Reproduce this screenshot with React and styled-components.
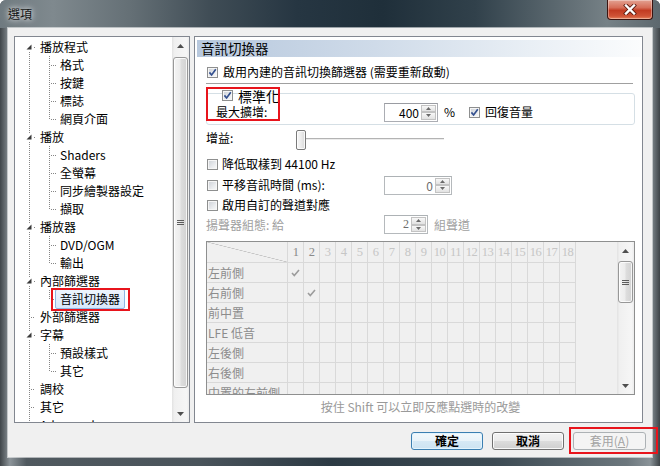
import React from 'react';
import styled, { createGlobalStyle, css } from 'styled-components';

const FONT = `"Noto Sans CJK TC", "Noto Sans", sans-serif`;

const GlobalStyle = createGlobalStyle`
  html, body { margin: 0; padding: 0; background: #ffffff; }
  body { font-family: ${FONT}; font-size: 12px; }
  *, *::before, *::after { box-sizing: border-box; }
`;

const Window = styled.div`
  position: relative;
  width: 660px;
  height: 466px;
  display: flex;
  flex-direction: column;
  border-radius: 6px 6px 0 0;
  overflow: hidden;
  font-family: ${FONT};
  background: linear-gradient(90deg, #3f4549 0%, #8c9499 1.5%, #50595f 4%, #4a545b 30%, #2c3a44 50%, #3c4a53 75%, #6c777d 95%, #8a9398 98.5%, #3d4347 100%);
`;

const TitleBar = styled.div`
  height: 28px;
  flex: none;
  display: flex;
  align-items: flex-start;
  padding-left: 8px;
  background: linear-gradient(90deg, #6f7a80 0%, #7f898e 8%, #646f75 20%, #3f4c55 32%, #263642 45%, #1f2f3a 58%, #31414b 72%, #5a676e 84%, #768186 92%, #5d686e 100%);
`;

const Title = styled.div`
  margin-top: 6px;
  font-size: 12px;
  line-height: 16px;
  color: #141414;
  text-shadow: 0 0 5px rgba(255, 255, 255, 0.9), 0 0 10px rgba(255, 255, 255, 0.6);
`;

const CloseButton = styled.div`
  margin-left: auto;
  margin-right: 7px;
  width: 46px;
  height: 20px;
  border: 1px solid #3b1410;
  border-top: none;
  border-radius: 0 0 4px 4px;
  background: linear-gradient(#e3a292 0%, #d66e58 40%, #c23b22 55%, #cf5336 85%, #e8845e 100%);
  box-shadow: inset 0 0 0 1px rgba(255, 255, 255, 0.35);
  display: flex;
  align-items: center;
  justify-content: center;
`;

const Client = styled.div`
  position: relative;
  flex: 1;
  margin: 0 8px 9px;
  background: #f0f0f0;
  display: flex;
  flex-direction: column;
  box-shadow: 0 0 0 1px rgba(255, 255, 255, 0.55);
`;

const Main = styled.div`
  flex: none;
  height: 395px;
  display: flex;
  gap: 4px;
  padding: 8px 9px 0 6px;
`;

const TreePanel = styled.div`
  width: 176px;
  height: 387px;
  border: 1px solid #828790;
  background: #fff;
  display: flex;
  overflow: hidden;
`;

const TreeList = styled.div`
  flex: 1;
  padding-top: 1px;
  overflow: hidden;
  display: flex;
  flex-direction: column;
`;

const TreeRow = styled.div`
  flex: none;
  height: 18px;
  display: flex;
  align-items: center;
`;

const TreeLabel = styled.span`
  position: relative;
  font-size: 12px;
  line-height: 16px;
  padding: 0 4px;
  border: 1px solid transparent;
  border-radius: 2px;
  white-space: nowrap;
  color: #000;
  margin-left: ${p => p.$ml || 0}px;
  ${p => p.$selected && css`
    padding: 1px 4px;
    background: linear-gradient(#eef5fd, #d6e8fb);
    border-color: #8fb5e2;
    &::after {
      content: '';
      position: absolute;
      top: -2px;
      left: -5px;
      right: -6px;
      bottom: -3px;
      border: 2px solid #e8141c;
    }
  `}
`;

const SBar = styled.div`
  width: 17px;
  flex: none;
  display: flex;
  flex-direction: column;
  background: linear-gradient(90deg, #e2e2e2 0%, #f0f0f0 15%, #f6f6f6 85%, #ececec 100%);
`;

const SArrow = styled.div`
  height: 17px;
  flex: none;
  display: flex;
  align-items: center;
  justify-content: center;
`;

const STrack = styled.div`
  flex: 1;
  display: flex;
  flex-direction: column;
  padding: ${p => p.$top}px 1px 0;
`;

const SThumb = styled.div`
  height: ${p => p.$h}px;
  flex: none;
  border: 1px solid #989898;
  border-radius: 3px;
  background: linear-gradient(90deg, #f4f4f4 0%, #ececec 45%, #dddddd 55%, #d2d2d2 100%);
  box-shadow: inset 0 0 0 1px rgba(255, 255, 255, 0.8);
  display: flex;
  align-items: center;
  justify-content: center;
`;

const Grip = styled.span`
  width: 7px;
  height: 5px;
  background: repeating-linear-gradient(#5c5c5c 0 1px, transparent 1px 2px);
`;

const RightPanel = styled.div`
  width: 449px;
  height: 387px;
  border: 1px solid #828790;
  background: #fff;
  display: flex;
  flex-direction: column;
`;

const Header = styled.div`
  flex: none;
  margin: 3px 1px 0 2px;
  height: 17px;
  padding-left: 4px;
  font-size: 13.5px;
  line-height: 17px;
  color: #000;
  background: linear-gradient(90deg, #b7c8dd 0%, #cfdbe9 40%, #e9eff5 75%, #fbfcfd 100%);
`;

const Content = styled.div`
  flex: 1;
  display: flex;
  flex-direction: column;
  padding: 0 7px 0 11px;
`;

const FieldRow = styled.div`
  flex: none;
  display: flex;
  align-items: center;
  height: ${p => p.$h}px;
  margin-top: ${p => p.$mt || 0}px;
`;

const LeftCell = styled.div`
  flex: none;
  display: flex;
  align-items: center;
  gap: ${p => p.$gap ?? 5}px;
  width: ${p => p.$w}px;
  padding-left: ${p => p.$pl ?? 1}px;
`;

const Text = styled.span`
  font-size: ${p => p.$size || 12}px;
  line-height: 16px;
  white-space: nowrap;
  color: ${p => (p.$disabled ? '#a0a0a0' : '#000')};
  padding-bottom: ${p => p.$pb || 0}px;
  margin-left: ${p => p.$ml || 0}px;
`;

const Separator = styled.div`
  flex: none;
  height: 1px;
  margin: 2px 2px 0 0;
  background: #a0a0a0;
`;

const Group = styled.div`
  position: relative;
  flex: none;
  margin-top: 9px;
  border: 1px solid #d5dfe5;
  border-radius: 3px;
  padding: 0 6px 2px 9px;
  display: flex;
  flex-direction: column;
  &::after {
    content: '';
    position: absolute;
    top: -7px;
    left: -1px;
    width: 74px;
    height: 34px;
    border: 2px solid #e8141c;
  }
`;

const Legend = styled.div`
  flex: none;
  height: 13px;
  margin-top: -5px;
  display: flex;
  align-items: center;
  gap: 5px;
  padding-left: 6px;
`;

const CheckBox = styled.span`
  flex: none;
  width: 11px;
  height: 11px;
  display: inline-flex;
  align-items: center;
  justify-content: center;
  border: 1px solid #8e8f8f;
  background: linear-gradient(135deg, #cbcfd5 0%, #e9ebee 60%, #fafafa 100%);
  box-shadow: inset 0 0 0 1px #f6f6f6;
  margin-left: ${p => p.$ml || 0}px;
`;

const Spin = styled.div`
  flex: none;
  display: flex;
  width: ${p => p.$w}px;
  height: 19px;
  border: 1px solid ${p => (p.$disabled ? '#b5b9bc' : '#abadb3')};
  border-top-color: ${p => (p.$disabled ? '#adb2b5' : '#9a9ca2')};
  background: #fff;
`;

const SpinValue = styled.div`
  flex: 1;
  text-align: right;
  padding-right: 2px;
  font-size: 12px;
  line-height: 17px;
  color: ${p => (p.$disabled ? '#6d6d6d' : '#000')};
  font-family: ${p => (p.$serif ? `"Liberation Serif", serif` : FONT)};
`;

const SpinButtons = styled.div`
  width: 16px;
  flex: none;
  display: flex;
  flex-direction: column;
  padding: 1px 1px 1px 0;
`;

const SpinBtn = styled.div`
  flex: 1;
  border: 1px solid #c3c3c3;
  background: linear-gradient(#f8f8f8, #e2e2e2);
  display: flex;
  align-items: center;
  justify-content: center;
`;

const SliderTrack = styled.div`
  flex: none;
  width: 148px;
  height: 20px;
  display: flex;
  background: linear-gradient(to bottom, transparent 8px, #b3b3b3 8px, #b3b3b3 9px, #ececec 9px, #ececec 10px, transparent 10px);
`;

const SliderThumb = styled.div`
  width: 10px;
  height: 20px;
  border: 1px solid #7a7a7a;
  border-radius: 2px;
  background: linear-gradient(90deg, #f7f7f7 0%, #ececec 50%, #d9d9d9 100%);
  box-shadow: inset 0 0 0 1px rgba(255, 255, 255, 0.8);
`;

const Grid = styled.div`
  flex: none;
  margin-top: 7px;
  height: 154px;
  border: 1px solid #8e8f8f;
  background: #f0f0f0;
  display: flex;
  overflow: hidden;
`;

const Table = styled.div`
  flex: none;
  display: grid;
  grid-template-columns: 81px repeat(18, 16px);
  grid-template-rows: 21px;
  grid-auto-rows: 20px;
  align-content: start;
`;

const Cell = styled.div`
  border-right: 1px solid #d9d9d9;
  border-bottom: 1px solid #d9d9d9;
  display: flex;
  align-items: center;
  justify-content: ${p => (p.$label ? 'flex-start' : 'center')};
  padding-left: ${p => (p.$label ? 1 : 0)}px;
  font-size: 12px;
  line-height: 16px;
  white-space: nowrap;
  overflow: hidden;
  color: #8c8c8c;
`;

const CornerCell = styled(Cell)`
  background: linear-gradient(to top right, transparent calc(50% - 0.6px), #bdbdbd 50%, transparent calc(50% + 0.6px));
`;

const NumCell = styled(Cell)`
  font-family: "Liberation Serif", serif;
  font-size: 12.5px;
  letter-spacing: -0.6px;
  color: ${p => (p.$active ? '#8a8a8a' : '#c6c6c6')};
`;

const GridFill = styled.div`
  flex: 1;
`;

const Footnote = styled.div`
  flex: none;
  margin-top: 3px;
  height: 18px;
  line-height: 18px;
  text-align: center;
  font-size: 12px;
  color: #9a9a9a;
`;

const Footer = styled.div`
  flex: 1;
  display: flex;
  justify-content: flex-end;
  align-items: flex-start;
  gap: 9px;
  padding: 9px 6px 0 0;
`;

const Button = styled.button`
  position: relative;
  width: ${p => p.$w}px;
  height: 18px;
  padding: 0;
  font-family: ${FONT};
  font-size: 12px;
  font-weight: 700;
  line-height: 16px;
  border-radius: 3px;
  border: 1px solid #707070;
  color: #000;
  background: linear-gradient(#f2f2f2 0%, #ebebeb 50%, #dddddd 50%, #cfcfcf 100%);
  box-shadow: inset 0 0 0 1px rgba(255, 255, 255, 0.85);
  ${p => p.$default && css`
    border-color: #3c7fb1;
    background: linear-gradient(#f3f9fc 0%, #e9f3f9 50%, #d6e9f5 50%, #cde3f1 100%);
    box-shadow: inset 0 0 0 1px #e3f4fd;
  `}
  ${p => p.$off && css`
    border-color: #adb2b5;
    background: #f4f4f4;
    color: #a3a3a3;
    font-weight: 400;
    box-shadow: none;
    &::after {
      content: '';
      position: absolute;
      top: -6px;
      left: -5px;
      right: -13px;
      bottom: -5px;
      border: 2px solid #e8141c;
    }
  `}
`;

/* ---------- drawings ---------- */

const Arrow = ({ down }) => (
  <svg width="7" height="4" viewBox="0 0 7 4">
    <polygon points={down ? '0,0 7,0 3.5,4' : '3.5,0 7,4 0,4'} fill="#4f4f4f" />
  </svg>
);

const TinyArrow = ({ down }) => (
  <svg width="5" height="3" viewBox="0 0 5 3">
    <polygon points={down ? '0,0 5,0 2.5,3' : '2.5,0 5,3 0,3'} fill="#6a6a6a" />
  </svg>
);

const Check = () => (
  <svg width="9" height="9" viewBox="0 0 9 9">
    <path d="M1.4 4.4 L3.6 7 L7.8 1.3" stroke="#34508f" strokeWidth="1.7" fill="none" />
  </svg>
);

const GridCheck = () => (
  <svg width="9" height="8" viewBox="0 0 9 8">
    <path d="M1 4 L3.3 6.5 L8 1" stroke="#9c9c9c" strokeWidth="1.6" fill="none" />
  </svg>
);

const CloseX = () => (
  <svg width="14" height="11" viewBox="0 0 14 11">
    <path d="M3 1.5 L11 9.5 M11 1.5 L3 9.5" stroke="#5b1b10" strokeWidth="4" strokeLinecap="square" />
    <path d="M3 1.5 L11 9.5 M11 1.5 L3 9.5" stroke="#ffffff" strokeWidth="2.4" strokeLinecap="square" />
  </svg>
);

const dots = { stroke: '#858585', strokeWidth: 1, strokeDasharray: '1 1', fill: 'none' };

const Guide = ({ level, exp, first, last }) => {
  const w = level === 0 ? 20 : 42;
  return (
    <svg width={w} height="18" viewBox={`0 0 ${w} 18`} style={{ flex: 'none' }}>
      <line x1="14.5" y1={first ? 12 : 0} x2="14.5" y2="18" {...dots} />
      {level === 1 && <line x1="34.5" y1="0" x2="34.5" y2={last ? 10 : 18} {...dots} />}
      {level === 1 && <line x1="36" y1="9.5" x2="42" y2="9.5" {...dots} />}
      {level === 0 && !exp && <line x1="16" y1="9.5" x2="20" y2="9.5" {...dots} />}
      {level === 0 && exp && (
        <>
          <rect x="11" y="5" width="7" height="8" fill="#fff" />
          <polygon points="16.5,6.5 16.5,11.5 11.5,11.5" fill="#3a3a3a" />
          <rect x="19" y="9" width="1" height="1" fill="#858585" />
        </>
      )}
    </svg>
  );
};

const ScrollBar = ({ top, h }) => (
  <SBar>
    <SArrow><Arrow /></SArrow>
    <STrack $top={top}>
      <SThumb $h={h}><Grip /></SThumb>
    </STrack>
    <SArrow><Arrow down /></SArrow>
  </SBar>
);

const SpinBox = ({ w, value, disabled, serif }) => (
  <Spin $w={w} $disabled={disabled}>
    <SpinValue $disabled={disabled} $serif={serif}>{value}</SpinValue>
    <SpinButtons>
      <SpinBtn><TinyArrow /></SpinBtn>
      <SpinBtn><TinyArrow down /></SpinBtn>
    </SpinButtons>
  </Spin>
);

const tree = [
  { t: '播放程式', l: 0, exp: true, first: true },
  { t: '格式', l: 1 },
  { t: '按鍵', l: 1 },
  { t: '標誌', l: 1 },
  { t: '網頁介面', l: 1, last: true },
  { t: '播放', l: 0, exp: true },
  { t: 'Shaders', l: 1 },
  { t: '全螢幕', l: 1 },
  { t: '同步繪製器設定', l: 1 },
  { t: '擷取', l: 1, last: true },
  { t: '播放器', l: 0, exp: true },
  { t: 'DVD/OGM', l: 1 },
  { t: '輸出', l: 1, last: true },
  { t: '內部篩選器', l: 0, exp: true },
  { t: '音訊切換器', l: 1, last: true, sel: true },
  { t: '外部篩選器', l: 0 },
  { t: '字幕', l: 0, exp: true },
  { t: '預設樣式', l: 1 },
  { t: '其它', l: 1, last: true },
  { t: '調校', l: 0 },
  { t: '其它', l: 0 },
  { t: 'Advanced', l: 0 },
];

const speakers = ['左前側', '右前側', '前中置', 'LFE 低音', '左後側', '右後側', '中置的左前側'];
const cols = Array.from({ length: 18 }, (_, i) => i + 1);
const mapping = { 0: 1, 1: 2 };

export default function App() {
  return (
    <>
      <GlobalStyle />
      <Window>
        <TitleBar>
          <Title>選項</Title>
          <CloseButton><CloseX /></CloseButton>
        </TitleBar>
        <Client>
          <Main>
            <TreePanel>
              <TreeList>
                {tree.map((n, i) => (
                  <TreeRow key={i}>
                    <Guide level={n.l} exp={n.exp} first={n.first} last={n.last} />
                    <TreeLabel $selected={n.sel} $ml={n.l === 1 ? -2 : 0}>{n.t}</TreeLabel>
                  </TreeRow>
                ))}
              </TreeList>
              <ScrollBar top={3} h={331} />
            </TreePanel>

            <RightPanel>
              <Header>音訊切換器</Header>
              <Content>
                <FieldRow $h={18} $mt={6}>
                  <LeftCell $w={430}>
                    <CheckBox><Check /></CheckBox>
                    <Text>啟用內建的音訊切換篩選器 (需要重新啟動)</Text>
                  </LeftCell>
                </FieldRow>
                <Separator />
                <Group>
                  <Legend>
                    <CheckBox><Check /></CheckBox>
                    <Text $size={14}>標準化</Text>
                  </Legend>
                  <FieldRow $h={20}>
                    <LeftCell $w={168} $pl={0}>
                      <Text>最大擴增:</Text>
                    </LeftCell>
                    <SpinBox w={54} value="400" />
                    <Text $ml={6}>%</Text>
                    <CheckBox $ml={14}><Check /></CheckBox>
                    <Text $ml={5}>回復音量</Text>
                  </FieldRow>
                </Group>
                <FieldRow $h={20} $mt={5}>
                  <LeftCell $w={90} $pl={0}>
                    <Text $pb={4}>增益:</Text>
                  </LeftCell>
                  <SliderTrack><SliderThumb /></SliderTrack>
                </FieldRow>
                <FieldRow $h={18} $mt={5}>
                  <LeftCell $w={178} $gap={4}>
                    <CheckBox />
                    <Text>降低取樣到 44100 Hz</Text>
                  </LeftCell>
                </FieldRow>
                <FieldRow $h={20} $mt={2}>
                  <LeftCell $w={178} $gap={4}>
                    <CheckBox />
                    <Text>平移音訊時間 (ms):</Text>
                  </LeftCell>
                  <SpinBox w={68} value="0" disabled />
                </FieldRow>
                <FieldRow $h={18} $mt={1}>
                  <LeftCell $w={178} $gap={4}>
                    <CheckBox />
                    <Text>啟用自訂的聲道對應</Text>
                  </LeftCell>
                </FieldRow>
                <FieldRow $h={19} $mt={1}>
                  <LeftCell $w={178} $pl={0}>
                    <Text $disabled>揚聲器組態: 給</Text>
                  </LeftCell>
                  <SpinBox w={44} value="2" disabled serif />
                  <Text $disabled $ml={6}>組聲道</Text>
                </FieldRow>
                <Grid>
                  <Table>
                    <CornerCell />
                    {cols.map(c => (
                      <NumCell key={c} $active={c <= 2}>{c}</NumCell>
                    ))}
                    {speakers.map((s, r) => (
                      <React.Fragment key={s}>
                        <Cell $label>{s}</Cell>
                        {cols.map(c => (
                          <Cell key={c}>{mapping[r] === c ? <GridCheck /> : null}</Cell>
                        ))}
                      </React.Fragment>
                    ))}
                  </Table>
                  <GridFill />
                  <ScrollBar top={2} h={42} />
                </Grid>
                <Footnote>按住 Shift 可以立即反應點選時的改變</Footnote>
              </Content>
            </RightPanel>
          </Main>
          <Footer>
            <Button $w={72} $default>確定</Button>
            <Button $w={72}>取消</Button>
            <Button $w={73} $off>套用(<u>A</u>)</Button>
          </Footer>
        </Client>
      </Window>
    </>
  );
}
